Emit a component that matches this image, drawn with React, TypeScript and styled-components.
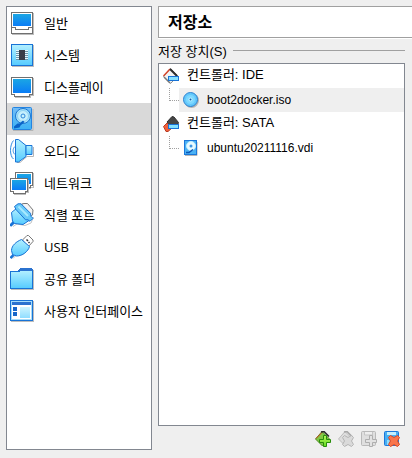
import React, { useState } from "react";
import styled, { createGlobalStyle } from "styled-components";

const GlobalStyle = createGlobalStyle`
  *, *::before, *::after { box-sizing: border-box; }
  body {
    margin: 0;
    background: #efefef;
    color: #000;
    font-family: "Liberation Sans", "Noto Sans CJK KR", sans-serif;
    font-size: 13px;
  }
`;

const Page = styled.div`
  display: grid;
  grid-template-columns: 146px minmax(0, 1fr);
  gap: 6px;
  min-height: 100vh;
  padding: 6px 0 8px 6px;
`;

const Sidebar = styled.nav`
  display: flex;
  flex-direction: column;
  border: 1px solid #828790;
  background: #fff;
`;

const NavButton = styled.button<{ $active: boolean }>`
  display: flex;
  align-items: center;
  gap: 10px;
  height: 32px;
  padding: 0 0 0 3px;
  border: 0;
  background: ${(p) => (p.$active ? "#d9d9d9" : "transparent")};
  color: #000;
  font-family: "Open Sans", "Noto Sans CJK KR", sans-serif;
  font-size: 13px;
  line-height: 20px;
  text-align: left;
  white-space: nowrap;
`;

const Main = styled.main`
  display: flex;
  flex-direction: column;
  min-width: 0;
`;

const Title = styled.h1`
  margin: 0;
  height: 32px;
  padding: 2px 0 0 9px;
  border: 1px solid #a0a0a0;
  border-right: 0;
  background: #fff;
  box-shadow: 0 1px 0 #fff;
  font-size: 16px;
  font-weight: 700;
  line-height: 28px;
`;

const Group = styled.section`
  display: flex;
  flex: 1;
  flex-direction: column;
  margin-right: 7px;
`;

const GroupLabel = styled.h2`
  display: flex;
  align-items: center;
  gap: 6px;
  height: 25px;
  margin: 0;
  font-size: 13px;
  font-weight: 400;
  white-space: nowrap;

  &::after {
    content: "";
    flex: 1;
    height: 1px;
    background: #a0a0a0;
  }
`;

const Tree = styled.ul`
  flex: 1;
  margin: 0;
  padding: 0;
  border: 1px solid #828790;
  background: #fff;
  list-style: none;
`;

const Branch = styled.ul`
  margin: 0;
  padding: 0;
  list-style: none;
`;

const ControllerRow = styled.div`
  display: flex;
  align-items: center;
  gap: 8px;
  height: 24px;
  padding-left: 4px;
  white-space: nowrap;
`;

const ControllerName = styled.span`
  padding-bottom: 2px;
  line-height: 20px;
`;

const DeviceRow = styled.li`
  display: flex;
  height: 24px;
  padding-left: 10px;
`;

const Connector = styled.span`
  width: 10px;
  height: 13px;
  border-left: 1px dotted #a0a0a0;
  border-bottom: 1px dotted #a0a0a0;
`;

const DeviceCell = styled.div<{ $selected: boolean }>`
  display: flex;
  flex: 1;
  align-items: center;
  gap: 8px;
  padding-left: 4px;
  background: ${(p) => (p.$selected ? "#efefef" : "transparent")};
  font-size: 12px;
  white-space: nowrap;
`;

const Toolbar = styled.div`
  display: flex;
  justify-content: flex-end;
  gap: 7px;
  padding: 5px 5px 3px 0;
`;

const ToolButton = styled.button`
  display: flex;
  width: 16px;
  height: 16px;
  padding: 0;
  border: 0;
  background: none;
`;

const LargeIcon = styled.svg.attrs({ viewBox: "0 0 24 24", "aria-hidden": true })`
  flex: none;
  width: 24px;
  height: 24px;
`;

const SmallIcon = styled.svg.attrs({ viewBox: "0 0 16 16", "aria-hidden": true })`
  flex: none;
  width: 16px;
  height: 16px;
`;

const GradientDefs = styled.svg`
  display: block;
  width: 0;
  height: 0;
`;

const Gradients = () => (
  <GradientDefs aria-hidden="true">
    <defs>
      <linearGradient id="screen" x1="0" y1="0" x2="0" y2="1">
        <stop offset="0" stopColor="#1ba6e4" />
        <stop offset="1" stopColor="#0a7cf6" />
      </linearGradient>
      <linearGradient id="aqua" x1="0" y1="0" x2="0" y2="1">
        <stop offset="0" stopColor="#b4f0ff" />
        <stop offset="1" stopColor="#55cbff" />
      </linearGradient>
      <linearGradient id="plate" x1="0" y1="0" x2="0" y2="1">
        <stop offset="0" stopColor="#75bdf6" />
        <stop offset="1" stopColor="#3cb2f5" />
      </linearGradient>
      <linearGradient id="green" x1="0" y1="0" x2="0" y2="1">
        <stop offset="0" stopColor="#b4f65a" />
        <stop offset="1" stopColor="#66dc22" />
      </linearGradient>
    </defs>
  </GradientDefs>
);

const GeneralIcon = () => (
  <LargeIcon shapeRendering="crispEdges">
    <path d="M23 2h1v22H2v-1h21z" fill="#bdbdbd" />
    <rect x="1.5" y="1.5" width="21" height="21" fill="#fff" stroke="#707070" />
    <rect x="3" y="3" width="18" height="12" fill="url(#screen)" />
    <path d="M1.5 16.5h4v2h13v-2h4" fill="none" stroke="#707070" />
  </LargeIcon>
);

const SystemIcon = () => (
  <LargeIcon shapeRendering="crispEdges">
    <path d="M23 2h1v22H2v-1h21z" fill="#bdbdbd" />
    <rect x="1.5" y="1.5" width="21" height="21" fill="url(#aqua)" stroke="#1873d6" />
    <path d="M6 7.5h12M6 9.5h12M6 11.5h12M6 13.5h12M6 15.5h12" stroke="#e9f8ff" />
    <path d="M6 8.5h12M6 10.5h12M6 12.5h12M6 14.5h12M6 16.5h12" stroke="#6a96ab" />
    <rect x="9" y="7" width="6" height="10" fill="#393e49" />
  </LargeIcon>
);

const DisplayIcon = () => (
  <LargeIcon shapeRendering="crispEdges">
    <path d="M23 3h1v18h-3v2H5v-1h15v-2h3z" fill="#bdbdbd" />
    <path d="M1.5 2.5h21v17h-3v2h-15v-2h-3z" fill="#fff" stroke="#707070" />
    <rect x="3" y="4" width="18" height="14" fill="url(#screen)" />
  </LargeIcon>
);

const StorageIcon = () => (
  <LargeIcon>
    <path d="M3 23.5h20V2" fill="none" stroke="#b5b5b5" />
    <rect x="2.5" y="0.5" width="19" height="22" rx="1" fill="url(#plate)" stroke="#2384e2" />
    <circle cx="13" cy="9" r="7.5" fill="#a6e2fb" stroke="#1d75cf" />
    <circle cx="13" cy="9" r="5.5" fill="#c5effd" stroke="#8dd0f2" />
    <circle cx="13" cy="9" r="2" fill="#c9f4ff" stroke="#2f86d9" />
    <path d="M4 19.5l3.500-3 2 0 3.500-3 1.500 1.500-4 3.500-1 2-5.500 1z" fill="#0a63c8" />
  </LargeIcon>
);

const AudioIcon = () => (
  <LargeIcon>
    <path d="M7 23.500h3l7-6h6.500V8" fill="none" stroke="#b5b5b5" />
    <path d="M5.500 .5h3l7.500 6v11l-7.500 5.500h-3z" fill="url(#aqua)" stroke="#1873d6" strokeLinejoin="round" />
    <path d="M16 6.500h6v9h-6z" fill="url(#aqua)" stroke="#1873d6" />
    <path d="M3.500 1.500C-.5 6-.5 17 3.500 20M5 7.500C2.500 9.500 2.500 13.500 5 15.500" fill="none" stroke="#2f8de0" />
  </LargeIcon>
);

const NetworkIcon = () => (
  <LargeIcon shapeRendering="crispEdges">
    <path d="M23 2h1v15h-3v1h-2v-2h4z" fill="#bdbdbd" />
    <path d="M5.500 1.500h17v13h-2v2h-15z" fill="#fff" stroke="#707070" />
    <rect x="7" y="3" width="14" height="10" fill="url(#screen)" />
    <path d="M18 9h1v13h-3v2H4v-1h11v-2h3z" fill="#bdbdbd" />
    <path d="M.5 7.500h17v13h-2v2h-12v-2h-3z" fill="#fff" stroke="#707070" />
    <rect x="2" y="9" width="14" height="10" fill="url(#screen)" />
  </LargeIcon>
);

const SerialIcon = () => (
  <LargeIcon>
    <path d="M3 23.500l4-2.500 8 1.500 6-2.500 2.500-6" fill="none" stroke="#c4c4c4" />
    <path d="M11.500 1L14 .5h3.500L23 7l-.5 5-3 2z" fill="#f4f4f4" stroke="#777" />
    <path d="M1 22L4 19" stroke="#1873d6" strokeWidth="3" strokeLinecap="round" />
    <path d="M7 5L1.500 9.500l1 8.500 2 2.500 8.500 1 6-4z" fill="url(#aqua)" stroke="#1873d6" strokeLinejoin="round" />
    <path d="M4.500 3.500L8 .8h3l9.500 9.500.5 3 2 2-3 3-2-1.500h-2.500L6 6.500z" fill="#69caf8" stroke="#1873d6" strokeLinejoin="round" />
    <path d="M8.500 3.500l9.500 9.500" stroke="#a8e9ff" strokeWidth="2" />
  </LargeIcon>
);

const UsbIcon = () => (
  <LargeIcon>
    <path d="M3 23.500l3-3 7-1 6-6" fill="none" stroke="#c4c4c4" />
    <path d="M12.500 5L17 .5h1.500L23 5v1.500L18 12z" fill="#fff" stroke="#777" strokeLinejoin="round" />
    <path d="M16.500 4.500l1.500 1.500M18.500 7l1 1" stroke="#333" strokeWidth="1.500" />
    <path d="M.5 23l3-3" stroke="#1873d6" strokeWidth="2.500" />
    <path d="M11.500 4.500C6.500 6.500 1.500 10.500 1.500 15.500l1 4 4 1.500C12.500 21 18 16.500 19.500 11.500z" fill="url(#aqua)" stroke="#1873d6" strokeLinejoin="round" />
  </LargeIcon>
);

const FolderIcon = () => (
  <LargeIcon shapeRendering="crispEdges">
    <path d="M23 3h1v20H1v-1h22z" fill="#bdbdbd" />
    <path d="M8 4l2-3h12l1 2v3H8z" fill="#2b72cf" />
    <path d="M.5 4.500h8l2-1h12v18H.5z" fill="url(#aqua)" stroke="#1873d6" />
    <path d="M10 2h12v2H9z" fill="#2b72cf" />
  </LargeIcon>
);

const InterfaceIcon = () => (
  <LargeIcon shapeRendering="crispEdges">
    <path d="M23 2h1v21H1v-1h22z" fill="#bdbdbd" />
    <rect x="0.5" y="1.5" width="22" height="20" fill="#fff" stroke="#1873d6" />
    <rect x="1.5" y="2.5" width="20" height="18" fill="none" stroke="#a5dcfa" />
    <rect x="2" y="3" width="19" height="3" fill="#2b72cf" />
    <path d="M3 8h4v4H3zM3 13h4v4H3z" fill="#1766c9" />
    <rect x="10" y="8" width="10" height="11" fill="url(#aqua)" opacity="0.65" />
  </LargeIcon>
);

const IdeIcon = () => (
  <SmallIcon>
    <path d="M7.500 .5L15 8l-7.500 7.500L.5 8.500z" fill="#f2f2f2" stroke="#8f8f8f" />
    <path d="M.5 8L7 1" stroke="#d8472c" strokeWidth="1.500" />
    <path d="M7 1l7 7" stroke="#2e2e2e" strokeWidth="2" />
    <path d="M1 9l6 6" stroke="#777" strokeWidth="1.500" />
    <rect x="5.500" y="8.500" width="10" height="4" fill="#83e0ff" stroke="#1873d6" />
  </SmallIcon>
);

const SataIcon = () => (
  <SmallIcon>
    <path d="M4 6L9 .5l2 .5 4.500 5.500-1 3L9 12z" fill="#464646" stroke="#333" />
    <path d="M.5 10.500L4 7l5 5-4 3.500H3z" fill="#f1603b" stroke="#b93c24" />
    <rect x="5.500" y="8.500" width="10" height="4" fill="#83e0ff" stroke="#1873d6" />
  </SmallIcon>
);

const DiscIcon = () => (
  <SmallIcon>
    <circle cx="8.500" cy="8.500" r="7.500" fill="#b4b4b4" />
    <circle cx="7.500" cy="7.500" r="7" fill="#63c8fb" stroke="#2e83d2" />
    <circle cx="7.500" cy="7.500" r="4.500" fill="#7ed8ff" />
    <circle cx="7.500" cy="7.500" r="2" fill="#b9f2ff" />
    <circle cx="7.500" cy="7.500" r="1" fill="#125eb5" />
  </SmallIcon>
);

const HardDiskIcon = () => (
  <SmallIcon>
    <path d="M2 15.500h12V2" fill="none" stroke="#b5b5b5" />
    <rect x="1.500" y=".5" width="12" height="14" fill="#4bb2f4" stroke="#1b78da" />
    <circle cx="8" cy="6" r="4.500" fill="#e9fbff" stroke="#c4efff" />
    <circle cx="8" cy="6" r="1.500" fill="#3f97e4" />
    <path d="M3 12.500h3l4-3" fill="none" stroke="#0a56b5" strokeWidth="1.500" />
  </SmallIcon>
);

const PLUS = "M8.500 4.500h3v4h4v3h-4v4h-3v-4h-4v-3h4z";
const CROSS = "M6.500 4.500l3.500 2 3.500-2 2 2-2 3.500 2 3.500-2 2-3.500-2-3.500 2-2-2 2-3.500-2-3.500z";

const AddControllerIcon = () => (
  <SmallIcon>
    <path d="M7 .5L14.500 8 7.500 15 .5 8z" fill="#83c844" stroke="#4d8b20" />
    <path d="M1 7.500L7 1.500" stroke="#d8472c" />
    <path d="M6 1l3-.5 5 5" fill="none" stroke="#292929" strokeWidth="1.500" />
    <path d={PLUS} fill="url(#green)" stroke="#278c0b" />
  </SmallIcon>
);

const RemoveControllerIcon = () => (
  <SmallIcon>
    <path d="M7 .5L14.500 8 7.500 15 .5 8z" fill="#dedede" stroke="#bcbcbc" />
    <path d="M6 1l3-.5 5 5" fill="none" stroke="#a7a7a7" strokeWidth="1.500" />
    <path d={CROSS} fill="#dadada" stroke="#b5b5b5" />
  </SmallIcon>
);

const AddAttachmentIcon = () => (
  <SmallIcon>
    <rect x=".5" y=".5" width="14" height="14" rx="1" fill="#dfdfdf" stroke="#b9b9b9" />
    <path d="M3.500 1v3h8V1" fill="#eee" stroke="#c5c5c5" />
    <path d={PLUS} fill="#e2e2e2" stroke="#aeaeae" />
  </SmallIcon>
);

const RemoveAttachmentIcon = () => (
  <SmallIcon>
    <rect x=".5" y=".5" width="14" height="14" rx="1" fill="#48aff2" stroke="#1c78db" />
    <path d="M3 1h9v3H3z" fill="#c4f0ff" />
    <path d="M3 9h8v5H3z" fill="#8fdcfc" />
    <path d={CROSS} fill="#f9754b" stroke="#d94824" />
  </SmallIcon>
);

const sections = [
  { label: "일반", Icon: GeneralIcon },
  { label: "시스템", Icon: SystemIcon },
  { label: "디스플레이", Icon: DisplayIcon },
  { label: "저장소", Icon: StorageIcon },
  { label: "오디오", Icon: AudioIcon },
  { label: "네트워크", Icon: NetworkIcon },
  { label: "직렬 포트", Icon: SerialIcon },
  { label: "USB", Icon: UsbIcon },
  { label: "공유 폴더", Icon: FolderIcon },
  { label: "사용자 인터페이스", Icon: InterfaceIcon },
];

const controllers = [
  { label: "컨트롤러: IDE", Icon: IdeIcon, device: "boot2docker.iso", DeviceIcon: DiscIcon },
  { label: "컨트롤러: SATA", Icon: SataIcon, device: "ubuntu20211116.vdi", DeviceIcon: HardDiskIcon },
];

export default function App() {
  const [section, setSection] = useState("저장소");
  const [selected, setSelected] = useState("boot2docker.iso");

  return (
    <Page>
      <GlobalStyle />
      <Sidebar>
        {sections.map(({ label, Icon }) => (
          <NavButton key={label} type="button" $active={label === section} onClick={() => setSection(label)}>
            <Icon />
            {label}
          </NavButton>
        ))}
        <Gradients />
      </Sidebar>
      <Main>
        <Title>{section}</Title>
        <Group aria-labelledby="devices-label">
          <GroupLabel id="devices-label">저장 장치(S)</GroupLabel>
          <Tree role="tree" aria-labelledby="devices-label">
            {controllers.map(({ label, Icon, device, DeviceIcon }) => (
              <li key={label} role="treeitem" aria-expanded="true">
                <ControllerRow>
                  <Icon />
                  <ControllerName>{label}</ControllerName>
                </ControllerRow>
                <Branch role="group">
                  <DeviceRow role="treeitem" aria-selected={device === selected} onClick={() => setSelected(device)}>
                    <Connector />
                    <DeviceCell $selected={device === selected}>
                      <DeviceIcon />
                      {device}
                    </DeviceCell>
                  </DeviceRow>
                </Branch>
              </li>
            ))}
          </Tree>
          <Toolbar>
            <ToolButton type="button" aria-label="컨트롤러 추가"><AddControllerIcon /></ToolButton>
            <ToolButton type="button" aria-label="컨트롤러 삭제" disabled><RemoveControllerIcon /></ToolButton>
            <ToolButton type="button" aria-label="연결 추가" disabled><AddAttachmentIcon /></ToolButton>
            <ToolButton type="button" aria-label="연결 삭제"><RemoveAttachmentIcon /></ToolButton>
          </Toolbar>
        </Group>
      </Main>
    </Page>
  );
}
